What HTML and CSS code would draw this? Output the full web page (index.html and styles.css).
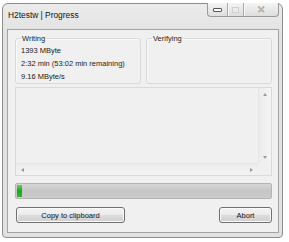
FILE: index.html
```html
<!DOCTYPE html>
<html lang="en">

<head>
    <meta charset="UTF-8">
    <title>H2testw | Progress</title>
    <link rel="stylesheet" href="styles.css">
</head>

<body>
    <div class="window">
        <div class="titlebar">
            <span class="title">H2testw | Progress</span>
            <div class="caption-buttons">
                <span class="caption-button minimize"><i></i></span>
                <span class="caption-button maximize"><i></i></span>
                <span class="caption-button close">&#x2715;</span>
            </div>
        </div>
        <div class="client">
            <div class="groups">
                <fieldset class="group">
                    <legend>Writing</legend>
                    <div>1393 MByte</div>
                    <div>2:32 min (53:02 min remaining)</div>
                    <div>9.16 MByte/s</div>
                </fieldset>
                <fieldset class="group">
                    <legend>Verifying</legend>
                </fieldset>
            </div>
            <div class="log">
                <div class="log-body"></div>
                <div class="vscroll">
                    <span class="arrow up"></span>
                    <span class="arrow down"></span>
                </div>
                <div class="hscroll">
                    <span class="arrow left"></span>
                    <span class="arrow right"></span>
                </div>
                <div class="corner"></div>
            </div>
            <div class="progress">
                <div class="progress-fill" style="width: 5px"></div>
            </div>
            <div class="actions">
                <button type="button" class="btn copy">Copy to clipboard</button>
                <button type="button" class="btn abort">Abort</button>
            </div>
        </div>
    </div>
</body>

</html>
```
FILE: styles.css
```css
:root {
    /* Win7 classic-ish dialog colours */
    --frame-border: #8c8c8c;
    --frame-bg: #e2e2e2;
    --client-bg: #f0f0f0;
    --client-border: #a3a3a3;
    --group-border: #d5dadf;
    --text: #1a1a1a;
    --font: "Liberation Sans", Arial, sans-serif;
}

html,
body {
    margin: 0;
    padding: 0;
    background: #ffffff;
}

body {
    font-family: var(--font);
    font-size: 7.5px;
    color: var(--text);
}

.window {
    margin: 3px 0 0 2px;
    width: 281px;
    height: 235px;
    box-sizing: border-box;
    border: 1px solid var(--frame-border);
    border-radius: 6px 6px 4px 4px;
    background: linear-gradient(#ebebeb, var(--frame-bg) 30px);
    padding: 0 3px 4px 4px;
    display: flex;
    flex-direction: column;
}

.titlebar {
    height: 25px;
    display: flex;
    align-items: flex-start;
    margin: 0 -1px 0 0;
}

.title {
    font-size: 8.4px;
    line-height: 10px;
    margin: 6px 0 0 1px;
    color: #111;
}

/* min / max / close pill */
.caption-buttons {
    margin: -1px 1px 0 auto;
    display: flex;
    height: 13px;
    border: 1px solid #9a9a9a;
    border-top: none;
    border-radius: 0 0 4px 4px;
    background: linear-gradient(#f4f4f4, #dedede);
    overflow: hidden;
}

.caption-button {
    display: flex;
    align-items: center;
    justify-content: center;
    border-left: 1px solid #a8a8a8;
    box-shadow: inset 1px 0 0 #fafafa;
}

.caption-button:first-child {
    border-left: none;
    box-shadow: none;
}

.minimize {
    width: 19px;
}

.minimize i {
    width: 7px;
    height: 2px;
    border: 1px solid #555;
    border-radius: 1px;
    background: #fff;
}

.maximize {
    width: 15px;
}

.maximize i {
    width: 5px;
    height: 4px;
    border: 1px solid #cfcfcf;
    background: #ececec;
}

.close {
    width: 34px;
    font-size: 9.5px;
    line-height: 10px;
    color: #f4f4f4;
    -webkit-text-stroke: 0.6px #9c9c9c;
}

.client {
    flex: 1;
    border: 1px solid var(--client-border);
    background: var(--client-bg);
    padding: 4px 6px 0 7px;
    display: flex;
    flex-direction: column;
}

.groups {
    display: grid;
    grid-template-columns: 126px 126px;
    gap: 5px;
}

.group {
    margin: 0;
    padding: 1px 5px 0 5px;
    min-width: 0;
    border: 1px solid var(--group-border);
    border-radius: 3px;
    box-shadow: inset 1px 1px 0 #fafafa;
    line-height: 13px;
    min-height: 40px;
}

.group legend {
    padding: 0 1px;
    margin-left: 0;
    line-height: 9px;
}

.log {
    margin-top: 3px;
    height: 89px;
    box-sizing: border-box;
    border: 1px solid #dadada;
    display: grid;
    grid-template-columns: 1fr 13px;
    grid-template-rows: 1fr 12px;
    background: var(--client-bg);
}

.vscroll,
.hscroll {
    background: linear-gradient(90deg, #ececec, #f3f3f3);
    display: flex;
    justify-content: space-between;
    align-items: center;
}

.vscroll {
    flex-direction: column;
    padding: 5px 0 4px;
    border-left: 1px solid #e6e6e6;
}

.hscroll {
    padding: 0 5px;
    border-top: 1px solid #e6e6e6;
    background: linear-gradient(#ececec, #f3f3f3);
}

.corner {
    background: var(--client-bg);
}

.arrow {
    width: 0;
    height: 0;
    border: 2px solid transparent;
}

.arrow.up {
    border-bottom: 3px solid #9a9a9a;
    border-top: none;
}

.arrow.down {
    border-top: 3px solid #9a9a9a;
    border-bottom: none;
}

.arrow.left {
    border-right: 3px solid #9a9a9a;
    border-left: none;
}

.arrow.right {
    border-left: 3px solid #9a9a9a;
    border-right: none;
}

.progress {
    margin-top: 7px;
    height: 16px;
    box-sizing: border-box;
    border: 1px solid #b4b4b4;
    border-radius: 2px;
    background: linear-gradient(#d6d6d6, #c6c6c6 50%, #cbcbcb);
    padding: 1px 0 1px 1px;
}

.progress-fill {
    height: 100%;
    background: linear-gradient(#5fd35a, #1ea51e 50%, #33b333);
}

.actions {
    margin-top: 8px;
    display: flex;
    justify-content: space-between;
}

.btn {
    height: 16px;
    padding: 0;
    font-family: var(--font);
    font-size: 7.5px;
    color: #111;
    border: 1px solid #707070;
    border-radius: 3px;
    background: linear-gradient(#f3f3f3, #ebebeb 50%, #dddddd 50%, #cfcfcf);
    box-shadow: inset 0 0 0 1px #fafafa;
}

.copy {
    width: 109px;
    margin-left: 1px;
}

.abort {
    width: 53px;
}
```
